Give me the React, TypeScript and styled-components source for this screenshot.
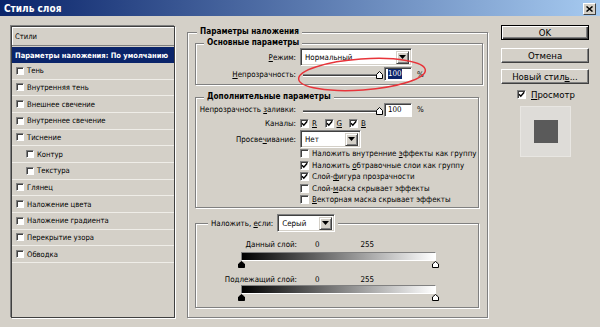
import React from "react";
import styled, { createGlobalStyle, css } from "styled-components";

const FACE = "#d4d0c8";
const SHADOW = "#808080";
const DARK = "#404040";
const NAVY = "#0a246a";
const FONT = `"DejaVu Sans Condensed", "Liberation Sans", Arial, sans-serif`;

const Global = createGlobalStyle`
  html, body { margin: 0; padding: 0; background: ${FACE}; }
  body { font-family: ${FONT}; font-size: 7.9px; color: #000; }
  * { box-sizing: border-box; }
`;

const Window = styled.div`
  position: relative;
  width: 600px;
  height: 327px;
  overflow: hidden;
  background: ${FACE};
  display: flex;
  flex-direction: column;
`;

const TitleBar = styled.div`
  height: 16px;
  flex: none;
  background: linear-gradient(to right, ${NAVY} 0%, #a6caf0 100%);
  display: flex;
  align-items: center;
  justify-content: space-between;
  padding: 0 4px;
`;

const TitleText = styled.span`
  color: #fff;
  font-weight: bold;
  font-size: 10px;
`;

const CloseBtn = styled.div`
  width: 13px;
  height: 12px;
  margin-top: 2px;
  background: ${FACE};
  border-top: 1px solid #fff;
  border-left: 1px solid #fff;
  border-right: 1px solid ${DARK};
  border-bottom: 1px solid ${DARK};
  display: flex;
  align-items: center;
  justify-content: center;
`;

const Content = styled.div`
  flex: 1;
  display: flex;
  align-items: flex-start;
`;

/* ---------- left styles list ---------- */
const StylesPanel = styled.div`
  margin: 10px 0 0 11px;
  width: 164px;
  height: 292px;
  border: 1px solid ${DARK};
  box-shadow: -1px -1px 0 ${SHADOW}, 1px 1px 0 #fff;
  display: flex;
  flex-direction: column;
  font-size: 7.6px;
`;

const StylesHeader = styled.div`
  height: 19px;
  flex: none;
  display: flex;
  align-items: center;
  padding-left: 3px;
  border-bottom: 1px solid ${SHADOW};
  box-shadow: inset 1px 1px 0 #fff;
  margin-bottom: 1px;
`;

const SelectedRow = styled.div`
  height: 16px;
  flex: none;
  background: ${NAVY};
  color: #fff;
  font-weight: bold;
  font-size: 7.5px;
  display: flex;
  align-items: center;
  padding-left: 3px;
  white-space: nowrap;
  overflow: hidden;
`;

const ListRow = styled.div<{ $indent?: boolean }>`
  height: 16.67px;
  flex: none;
  display: flex;
  align-items: center;
  gap: 3px;
  padding-left: ${(p) => (p.$indent ? 14 : 4)}px;
  border-bottom: 1px solid #efede8;
  white-space: nowrap;
`;

/* ---------- common controls ---------- */
const Box = styled.span<{ $size: number }>`
  width: ${(p) => p.$size}px;
  height: ${(p) => p.$size}px;
  flex: none;
  background: #fff;
  border-top: 1px solid ${SHADOW};
  border-left: 1px solid ${SHADOW};
  border-right: 1px solid #fff;
  border-bottom: 1px solid #fff;
  box-shadow: inset 1px 1px 0 ${DARK};
  display: inline-flex;
  align-items: center;
  justify-content: center;
`;

const Check = ({ checked, size = 9 }: { checked?: boolean; size?: number }) => (
  <Box $size={size}>
    {checked && (
      <svg width={size - 2} height={size - 2} viewBox="0 0 7 7">
        <path d="M1 3.2 L2.8 5.2 L6.2 1.2" fill="none" stroke="#000" strokeWidth="1.4" />
      </svg>
    )}
  </Box>
);

const U = styled.span`
  text-decoration: underline;
`;

const Group = styled.div<{ $w: number; $h: number; $mt: number }>`
  position: relative;
  width: ${(p) => p.$w}px;
  height: ${(p) => p.$h}px;
  margin-top: ${(p) => p.$mt}px;
  flex: none;
  border: 1px solid ${SHADOW};
  box-shadow: 1px 1px 0 #fff, inset 1px 1px 0 #fff;
  display: flex;
  flex-direction: column;
`;

const OuterGroup = styled(Group)`
  margin-left: 12px;
  padding-left: 7px;
`;

const GroupTitle = styled.div<{ $left: number; $top?: number; $plain?: boolean }>`
  position: absolute;
  top: ${(p) => p.$top ?? -7}px;
  left: ${(p) => p.$left}px;
  padding: 0 3px;
  background: ${FACE};
  font-weight: ${(p) => (p.$plain ? "normal" : "bold")};
  font-size: ${(p) => (p.$plain ? 7.9 : 8.2)}px;
  line-height: 11px;
  white-space: nowrap;
  display: flex;
  align-items: center;
  gap: 4px;
`;

const Row = styled.div<{ $h: number }>`
  height: ${(p) => p.$h}px;
  flex: none;
  display: flex;
  align-items: center;
  white-space: nowrap;
`;

const Label = styled.span<{ $w?: number }>`
  width: ${(p) => p.$w ?? 100}px;
  text-align: right;
  margin-right: 4px;
  flex: none;
`;

const SelectBox = styled.div<{ $w: number }>`
  width: ${(p) => p.$w}px;
  height: 18px;
  flex: none;
  background: #fff;
  border-top: 1px solid ${SHADOW};
  border-left: 1px solid ${SHADOW};
  border-right: 1px solid #fff;
  border-bottom: 1px solid #fff;
  box-shadow: inset 1px 1px 0 ${DARK}, inset -1px -1px 0 ${FACE};
  display: flex;
  align-items: center;
  padding: 2px 2px 2px 4px;
  font-weight: normal;
`;

const SelectText = styled.span`
  flex: 1;
`;

const DropBtn = styled.span`
  width: 13px;
  height: 13px;
  flex: none;
  background: ${FACE};
  border-top: 1px solid ${FACE};
  border-left: 1px solid ${FACE};
  border-right: 1px solid ${DARK};
  border-bottom: 1px solid ${DARK};
  box-shadow: inset 1px 1px 0 #fff, inset -1px -1px 0 ${SHADOW};
  display: flex;
  align-items: center;
  justify-content: center;
`;

const Select = ({ w, value }: { w: number; value: string }) => (
  <SelectBox $w={w}>
    <SelectText>{value}</SelectText>
    <DropBtn>
      <svg width="7" height="4" viewBox="0 0 7 4">
        <path d="M0 0 H7 L3.5 4 Z" fill="#000" />
      </svg>
    </DropBtn>
  </SelectBox>
);

const SliderWrap = styled.div`
  position: relative;
  width: 84px;
  height: 12px;
  flex: none;
  display: flex;
  align-items: center;
`;

const Track = styled.div`
  margin-left: 3px;
  width: 77px;
  height: 3px;
  border-top: 1px solid ${SHADOW};
  border-bottom: 1px solid #fff;
  background: ${DARK};
  margin-top: 3px;
`;

const SliderThumb = styled.svg`
  position: absolute;
  left: 76px;
  top: 3px;
`;

const Thumb = ({ dark }: { dark?: boolean }) => (
  <svg width="7" height="7" viewBox="0 0 7 7">
    <path
      d="M0.5 6.5 V3 L3.5 0.5 L6.5 3 V6.5 Z"
      fill={dark ? "#000" : "#fff"}
      stroke="#000"
      strokeWidth="1"
    />
  </svg>
);

const Slider = () => (
  <SliderWrap>
    <Track />
    <SliderThumb width="7" height="8" viewBox="0 0 7 8">
      <path d="M0.5 7.5 V3.5 L3.5 0.5 L6.5 3.5 V7.5 Z" fill="#fff" stroke="#000" strokeWidth="1" />
    </SliderThumb>
  </SliderWrap>
);

const NumInput = styled.div`
  width: 28px;
  height: 14px;
  flex: none;
  background: #fff;
  border-top: 1px solid ${SHADOW};
  border-left: 1px solid ${SHADOW};
  border-right: 1px solid #fff;
  border-bottom: 1px solid #fff;
  box-shadow: inset 1px 1px 0 ${DARK};
  display: flex;
  align-items: center;
  padding-left: 3px;
`;

const Sel = styled.span`
  background: ${NAVY};
  color: #fff;
  line-height: 10px;
`;

const Percent = styled.span`
  margin-left: 5px;
`;

const Channel = styled.span`
  display: inline-flex;
  align-items: center;
  gap: 3px;
  width: 24.5px;
  flex: none;
`;

const CheckRow = styled.div`
  height: 11.5px;
  flex: none;
  display: flex;
  align-items: center;
  gap: 3px;
  padding-left: 104px;
  white-space: nowrap;
`;

const Padding = styled.div<{ $h: number }>`
  height: ${(p) => p.$h}px;
  flex: none;
`;

const Num = styled.span<{ $ml: number }>`
  margin-left: ${(p) => p.$ml}px;
`;

const GradBar = styled.div`
  margin-left: 45px;
  width: 195px;
  height: 9px;
  flex: none;
  background: linear-gradient(to right, #000, #fff);
  border-top: 1px solid ${SHADOW};
  border-left: 1px solid ${SHADOW};
  border-right: 1px solid #fff;
  border-bottom: 1px solid #fff;
`;

const ThumbRow = styled.div`
  margin-left: 42px;
  width: 201px;
  height: 7px;
  flex: none;
  display: flex;
  justify-content: space-between;
  align-items: flex-start;
`;

/* ---------- right column ---------- */
const RightCol = styled.div`
  margin: 9px 0 0 13px;
  width: 88px;
  display: flex;
  flex-direction: column;
`;

const Button = styled.div<{ $default?: boolean; $mt: number }>`
  height: 15px;
  margin-top: ${(p) => p.$mt}px;
  display: flex;
  align-items: center;
  justify-content: center;
  font-size: 9.5px;
  background: ${FACE};
  ${(p) =>
    p.$default
      ? css`
          border: 1px solid #000;
          box-shadow: inset 1px 1px 0 #fff, inset -1px -1px 0 ${DARK}, inset -2px -2px 0 ${SHADOW};
        `
      : css`
          border-top: 1px solid #fff;
          border-left: 1px solid #fff;
          border-right: 1px solid ${DARK};
          border-bottom: 1px solid ${DARK};
          box-shadow: inset -1px -1px 0 ${SHADOW};
        `}
`;

const PreviewToggle = styled.div`
  margin: 5px 0 0 16px;
  height: 10px;
  display: flex;
  align-items: center;
  gap: 5px;
  font-size: 9.5px;
`;

const PreviewBox = styled.div`
  margin: 7px 0 0 19px;
  width: 51px;
  height: 51px;
  background: #dedcd8;
  border: 1px solid #e8e6e2;
  display: flex;
  align-items: center;
  justify-content: center;
`;

const PreviewSwatch = styled.div`
  width: 24px;
  height: 23px;
  background: #5a5a5a;
`;

const Annotation = styled.svg`
  position: absolute;
  left: 290px;
  top: 52px;
  pointer-events: none;
`;

const leftItems: { label: string; indent?: boolean }[] = [
  { label: "Тень" },
  { label: "Внутренняя тень" },
  { label: "Внешнее свечение" },
  { label: "Внутреннее свечение" },
  { label: "Тиснение" },
  { label: "Контур", indent: true },
  { label: "Текстура", indent: true },
  { label: "Глянец" },
  { label: "Наложение цвета" },
  { label: "Наложение градиента" },
  { label: "Перекрытие узора" },
  { label: "Обводка" },
];

export default function App() {
  return (
    <>
      <Global />
      <Window>
        <TitleBar>
          <TitleText>Стиль слоя</TitleText>
          <CloseBtn>
            <svg width="7" height="6" viewBox="0 0 7 6">
              <path d="M0.5 0.5 L6.5 5.5 M6.5 0.5 L0.5 5.5" stroke="#000" strokeWidth="1.5" />
            </svg>
          </CloseBtn>
        </TitleBar>
        <Content>
          <StylesPanel>
            <StylesHeader>Стили</StylesHeader>
            <SelectedRow>Параметры наложения: По умолчанию</SelectedRow>
            {leftItems.map((it) => (
              <ListRow key={it.label} $indent={it.indent}>
                <Check size={8} />
                <span>{it.label}</span>
              </ListRow>
            ))}
          </StylesPanel>

          <OuterGroup $w={301} $h={286} $mt={16}>
            <GroupTitle $left={9}>Параметры наложения</GroupTitle>

            <Group $w={288} $h={42} $mt={10}>
              <GroupTitle $left={8}>Основные параметры</GroupTitle>
              <Padding $h={4} />
              <Row $h={18}>
                <Label>
                  <U>Р</U>ежим:
                </Label>
                <Select w={112} value="Нормальный" />
              </Row>
              <Row $h={16}>
                <Label>
                  <U>Н</U>епрозрачность:
                </Label>
                <Slider />
                <NumInput>
                  <Sel>100</Sel>
                </NumInput>
                <Percent>%</Percent>
              </Row>
            </Group>

            <Group $w={284} $h={111} $mt={12}>
              <GroupTitle $left={8}>Дополнительные параметры</GroupTitle>
              <Padding $h={4} />
              <Row $h={15}>
                <Label>
                  Непрозрачность <U>з</U>аливки:
                </Label>
                <Slider />
                <NumInput>100</NumInput>
                <Percent>%</Percent>
              </Row>
              <Row $h={13}>
                <Label>Каналы:</Label>
                <Channel>
                  <Check checked />
                  <U>R</U>
                </Channel>
                <Channel>
                  <Check checked />
                  <U>G</U>
                </Channel>
                <Channel>
                  <Check checked />
                  <U>B</U>
                </Channel>
              </Row>
              <Row $h={18}>
                <Label>
                  Просве<U>ч</U>ивание:
                </Label>
                <Select w={61} value="Нет" />
              </Row>
              <CheckRow>
                <Check />
                <span>
                  Наложить внутренние <U>э</U>ффекты как группу
                </span>
              </CheckRow>
              <CheckRow>
                <Check checked />
                <span>
                  Наложить <U>о</U>бтравочные слои как группу
                </span>
              </CheckRow>
              <CheckRow>
                <Check checked />
                <span>
                  Слой-<U>ф</U>игура прозрачности
                </span>
              </CheckRow>
              <CheckRow>
                <Check />
                <span>
                  Слой-<U>м</U>аска скрывает эффекты
                </span>
              </CheckRow>
              <CheckRow>
                <Check />
                <span>
                  <U>В</U>екторная маска скрывает эффекты
                </span>
              </CheckRow>
            </Group>

            <Group $w={284} $h={85} $mt={15}>
              <GroupTitle $left={12} $top={-10} $plain>
                <span>
                  Наложить, <U>е</U>сли:
                </span>
                <Select w={58} value="Серый" />
              </GroupTitle>
              <Padding $h={14} />
              <Row $h={12}>
                <Label $w={101}>Данный слой:</Label>
                <Num $ml={14}>0</Num>
                <Num $ml={41}>255</Num>
              </Row>
              <Padding $h={2} />
              <GradBar />
              <ThumbRow>
                <Thumb dark />
                <Thumb />
              </ThumbRow>
              <Padding $h={5} />
              <Row $h={12}>
                <Label $w={101}>Подлежащий слой:</Label>
                <Num $ml={14}>0</Num>
                <Num $ml={41}>255</Num>
              </Row>
              <GradBar />
              <ThumbRow>
                <Thumb dark />
                <Thumb />
              </ThumbRow>
            </Group>
          </OuterGroup>

          <RightCol>
            <Button $default $mt={0}>
              OK
            </Button>
            <Button $mt={8}>Отмена</Button>
            <Button $mt={6}>
              Новый стил<U>ь</U>...
            </Button>
            <PreviewToggle>
              <Check checked />
              <span>
                <U>П</U>росмотр
              </span>
            </PreviewToggle>
            <PreviewBox>
              <PreviewSwatch />
            </PreviewBox>
          </RightCol>
        </Content>

        <Annotation width="145" height="45" viewBox="0 0 145 45">
          <ellipse
            cx="72"
            cy="22.5"
            rx="63.5"
            ry="15.5"
            transform="rotate(-4 72 22.5)"
            fill="none"
            stroke="#e8343a"
            strokeWidth="1.5"
          />
        </Annotation>
      </Window>
    </>
  );
}
